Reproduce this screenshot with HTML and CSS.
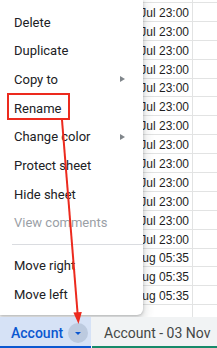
FILE: index.html
```html
<!DOCTYPE html>
<html>
<head>
<meta charset="utf-8">
<link rel="stylesheet" href="styles.css">
</head>
<body>
<div class="sheet">
  <div class="grid">
    <div class="rows">
      <div class="row"><div class="cell"></div><div class="rest"></div></div>
      <div class="row"><div class="cell">19 Jul 23:00</div><div class="rest"></div></div>
      <div class="row"><div class="cell">19 Jul 23:00</div><div class="rest"></div></div>
      <div class="row"><div class="cell">19 Jul 23:00</div><div class="rest"></div></div>
      <div class="row"><div class="cell">19 Jul 23:00</div><div class="rest"></div></div>
      <div class="row"><div class="cell">19 Jul 23:00</div><div class="rest"></div></div>
      <div class="row"><div class="cell">19 Jul 23:00</div><div class="rest"></div></div>
      <div class="row"><div class="cell">19 Jul 23:00</div><div class="rest"></div></div>
      <div class="row"><div class="cell">19 Jul 23:00</div><div class="rest"></div></div>
      <div class="row"><div class="cell">19 Jul 23:00</div><div class="rest"></div></div>
      <div class="row"><div class="cell">19 Jul 23:00</div><div class="rest"></div></div>
      <div class="row"><div class="cell">19 Jul 23:00</div><div class="rest"></div></div>
      <div class="row"><div class="cell">19 Jul 23:00</div><div class="rest"></div></div>
      <div class="row"><div class="cell">19 Jul 23:00</div><div class="rest"></div></div>
      <div class="row"><div class="cell">02 Aug 05:35</div><div class="rest"></div></div>
      <div class="row"><div class="cell">02 Aug 05:35</div><div class="rest"></div></div>
      <div class="row"><div class="cell">02 Aug 05:35</div><div class="rest"></div></div>
      <div class="row"><div class="cell"></div><div class="rest"></div></div>
    </div>
    <div class="menu">
      <div class="item">Delete</div>
      <div class="item">Duplicate</div>
      <div class="item">Copy to <span class="sub"></span></div>
      <div class="item">Rename</div>
      <div class="item">Change color <span class="sub"></span></div>
      <div class="item">Protect sheet</div>
      <div class="item">Hide sheet</div>
      <div class="item disabled">View comments</div>
      <div class="divider"></div>
      <div class="item">Move right</div>
      <div class="item">Move left</div>
    </div>
  </div>
  <div class="tabs">
    <div class="tab active">
      <span class="tab-name">Account</span>
      <span class="drop"><span class="caret"></span></span>
    </div>
    <div class="tab other">
      <span class="tab-name">Account - 03 Nov</span>
    </div>
  </div>
  <svg class="annot" width="217" height="348" viewBox="0 0 217 348">
    <rect x="8" y="94" width="61" height="25" fill="none" stroke="#ec2a1e" stroke-width="2"/>
    <line x1="62" y1="120" x2="77.6" y2="313.5" stroke="#ec2a1e" stroke-width="2"/>
    <polygon points="73.4,312.5 81.8,311.9 78.5,324" fill="#ec2a1e"/>
  </svg>
</div>
</body>
</html>
```
FILE: styles.css
```css
* { box-sizing: border-box; }
html, body {
  margin: 0;
  padding: 0;
  width: 217px;
  height: 348px;
  overflow: hidden;
  background: #ffffff;
}
.sheet {
  position: relative;
  width: 217px;
  height: 348px;
  display: flex;
  flex-direction: column;
}
.grid {
  position: relative;
  height: 317px;
  overflow: hidden;
  background: #ffffff;
}
.rows {
  margin-top: -15.9px;
  display: flex;
  flex-direction: column;
}
.row {
  display: flex;
  height: 18.9px;
  border-bottom: 1px solid #e2e3e3;
}
.cell {
  width: 193px;
  border-right: 1px solid #e2e3e3;
  display: flex;
  align-items: flex-end;
  justify-content: flex-end;
  padding: 0 3px 1px 0;
  font-family: "Liberation Sans", Arial, sans-serif;
  font-size: 12px;
  line-height: 14px;
  color: #1f1f1f;
  white-space: nowrap;
}
.rest { flex: 1; }

.menu {
  position: absolute;
  left: 0;
  top: 0;
  width: 143px;
  height: 315px;
  background: #ffffff;
  border-radius: 0 0 6px 0;
  box-shadow: 0 1px 3px rgba(60,64,67,0.3), 0 4px 8px 3px rgba(60,64,67,0.15);
  padding-top: 7.7px;
  font-family: Roboto, "Noto Sans", sans-serif;
  font-size: 13px;
  color: #202124;
}
.item {
  height: 28.7px;
  display: flex;
  align-items: center;
  justify-content: space-between;
  padding: 0 18px 0 14px;
  white-space: nowrap;
}
.item.disabled { color: #9aa0a6; }
.sub {
  width: 0;
  height: 0;
  border-top: 3px solid transparent;
  border-bottom: 3px solid transparent;
  border-left: 5px solid #80868b;
}
.divider {
  height: 14.4px;
  margin-left: 12px;
  display: flex;
  align-items: center;
}
.divider::before {
  content: "";
  flex: 1;
  height: 1px;
  background: #dadce0;
}

.tabs {
  height: 31px;
  display: flex;
  background: #f1f3f4;
  font-family: Roboto, "Noto Sans", sans-serif;
  font-size: 14px;
}
.tab {
  display: flex;
  align-items: center;
  height: 31px;
  padding-top: 2px;
  white-space: nowrap;
}
.tab.active {
  width: 91px;
  padding-left: 11px;
  gap: 5px;
  background: #d6e2f6;
  border-bottom: 2px solid #0b57d0;
  color: #0b57d0;
  font-weight: 500;
}
.drop {
  width: 20px;
  height: 20px;
  border-radius: 50%;
  background: #bccadf;
  display: flex;
  align-items: center;
  justify-content: center;
}
.caret {
  width: 0;
  height: 0;
  border-left: 3.5px solid transparent;
  border-right: 3.5px solid transparent;
  border-top: 3.5px solid #0b57d0;
  margin-top: 2px;
}
.tab.other {
  flex: 1;
  padding-left: 12px;
  color: #444746;
  border-bottom: 2px solid #168a6a;
  margin-left: 1px;
}
.annot {
  position: absolute;
  left: 0;
  top: 0;
  pointer-events: none;
}
```
